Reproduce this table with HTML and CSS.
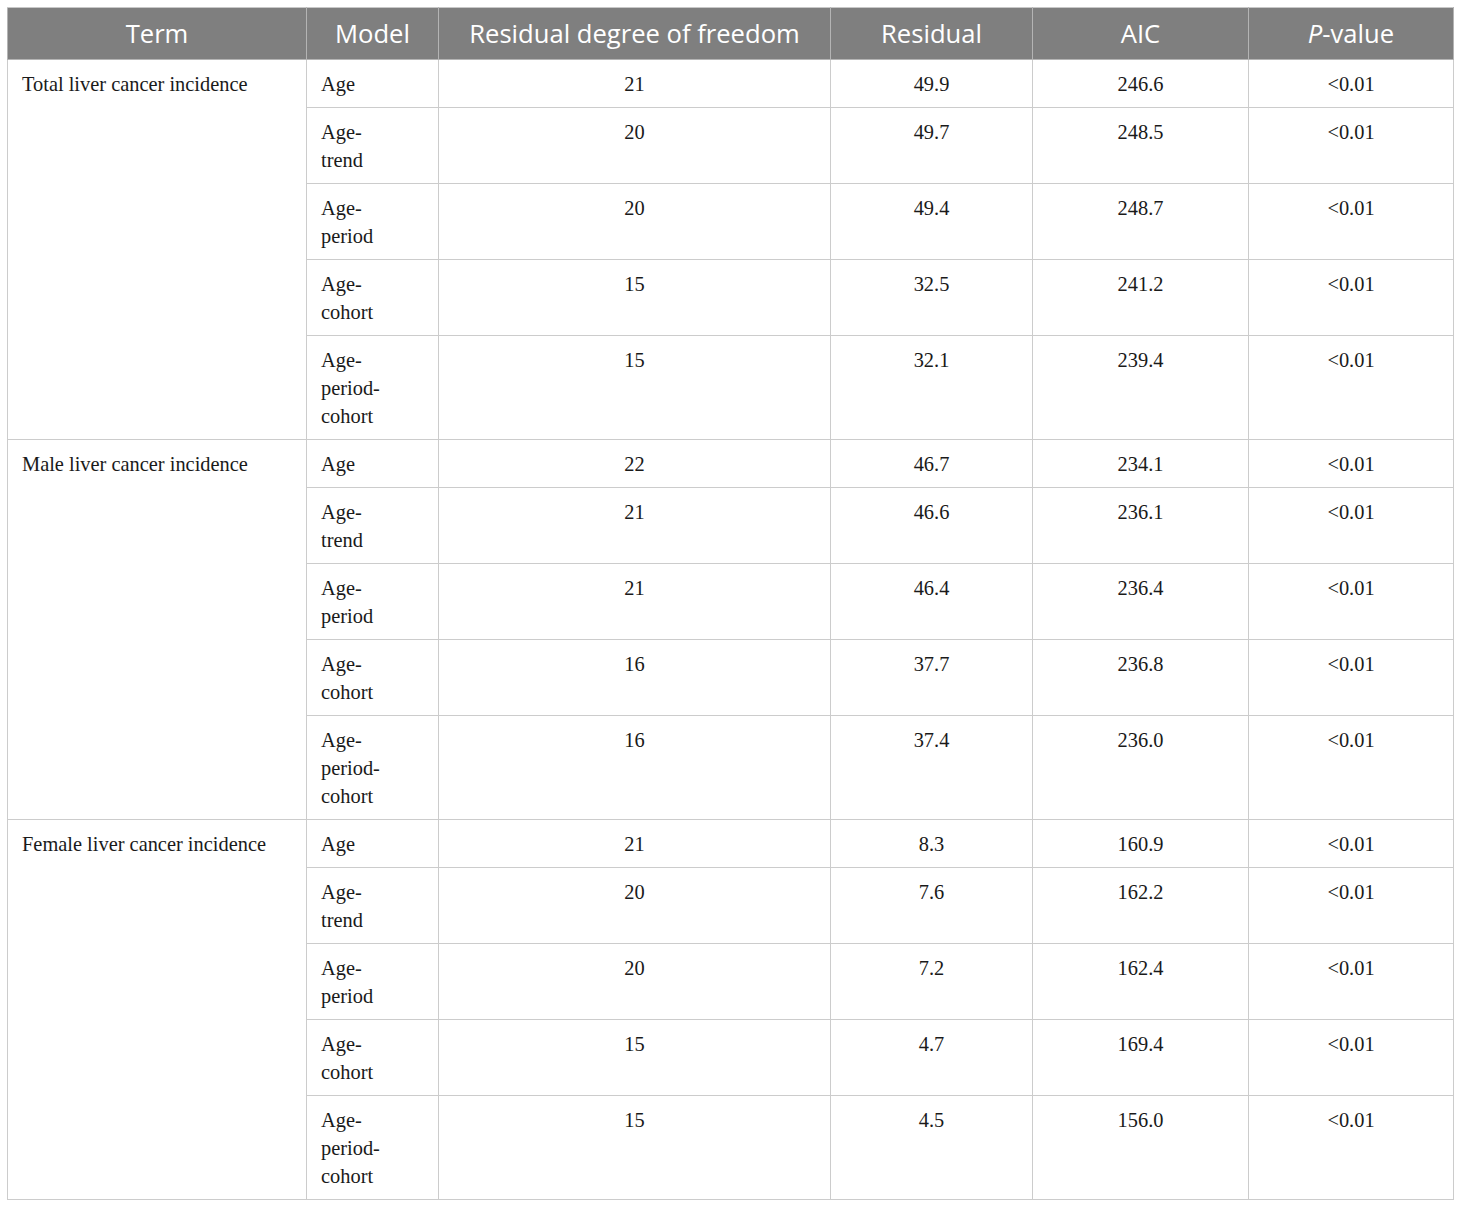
FILE: index.html
```html
<!DOCTYPE html>
<html>
<head>
<meta charset="utf-8">
<link rel="stylesheet" href="styles.css">
</head>
<body>
<table class="tbl">
  <colgroup>
    <col class="c-term"><col class="c-model"><col class="c-df"><col class="c-res"><col class="c-aic"><col class="c-p">
  </colgroup>
  <thead>
    <tr>
      <th>Term</th><th>Model</th><th>Residual degree of freedom</th><th>Residual</th><th>AIC</th><th><i>P</i>-value</th>
    </tr>
  </thead>
  <tbody>
    <tr><td class="term" rowspan="5">Total liver cancer incidence</td><td class="model">Age</td><td>21</td><td>49.9</td><td>246.6</td><td>&lt;0.01</td></tr>
    <tr><td class="model">Age-<br>trend</td><td>20</td><td>49.7</td><td>248.5</td><td>&lt;0.01</td></tr>
    <tr><td class="model">Age-<br>period</td><td>20</td><td>49.4</td><td>248.7</td><td>&lt;0.01</td></tr>
    <tr><td class="model">Age-<br>cohort</td><td>15</td><td>32.5</td><td>241.2</td><td>&lt;0.01</td></tr>
    <tr><td class="model">Age-<br>period-<br>cohort</td><td>15</td><td>32.1</td><td>239.4</td><td>&lt;0.01</td></tr>

    <tr><td class="term" rowspan="5">Male liver cancer incidence</td><td class="model">Age</td><td>22</td><td>46.7</td><td>234.1</td><td>&lt;0.01</td></tr>
    <tr><td class="model">Age-<br>trend</td><td>21</td><td>46.6</td><td>236.1</td><td>&lt;0.01</td></tr>
    <tr><td class="model">Age-<br>period</td><td>21</td><td>46.4</td><td>236.4</td><td>&lt;0.01</td></tr>
    <tr><td class="model">Age-<br>cohort</td><td>16</td><td>37.7</td><td>236.8</td><td>&lt;0.01</td></tr>
    <tr><td class="model">Age-<br>period-<br>cohort</td><td>16</td><td>37.4</td><td>236.0</td><td>&lt;0.01</td></tr>

    <tr><td class="term" rowspan="5">Female liver cancer incidence</td><td class="model">Age</td><td>21</td><td>8.3</td><td>160.9</td><td>&lt;0.01</td></tr>
    <tr><td class="model">Age-<br>trend</td><td>20</td><td>7.6</td><td>162.2</td><td>&lt;0.01</td></tr>
    <tr><td class="model">Age-<br>period</td><td>20</td><td>7.2</td><td>162.4</td><td>&lt;0.01</td></tr>
    <tr><td class="model">Age-<br>cohort</td><td>15</td><td>4.7</td><td>169.4</td><td>&lt;0.01</td></tr>
    <tr><td class="model">Age-<br>period-<br>cohort</td><td>15</td><td>4.5</td><td>156.0</td><td>&lt;0.01</td></tr>
  </tbody>
</table>
</body>
</html>
```

FILE: styles.css
```css
html, body {
  margin: 0;
  padding: 0;
  background: #ffffff;
}
body {
  padding: 7px 0 0 7px;
}
.tbl {
  border-collapse: collapse;
  table-layout: fixed;
  width: 1446px;
  color: #1a1a1a;
}
.c-term { width: 299px; }
.c-model { width: 132px; }
.c-df { width: 392px; }
.c-res { width: 202px; }
.c-aic { width: 216px; }
.c-p { width: 205px; }

.tbl th {
  background: #7f7f7f;
  color: #ffffff;
  font-family: "Open Sans", "Liberation Sans", sans-serif;
  font-weight: 400;
  font-size: 25.6px;
  line-height: 30px;
  height: 52px;
  padding: 0 8px;
  box-sizing: border-box;
  text-align: center;
  border: 1px solid #b4b4b4;
  border-top-color: #c8c8c8;
}
.tbl th i {
  font-style: italic;
}
.tbl td {
  font-family: "Liberation Serif", "Times New Roman", serif;
  font-size: 20.4px;
  line-height: 28px;
  padding: 10px 14px 9px;
  vertical-align: top;
  text-align: center;
  border: 1px solid #cccccc;
}
.tbl td.term,
.tbl td.model {
  text-align: left;
}
```
